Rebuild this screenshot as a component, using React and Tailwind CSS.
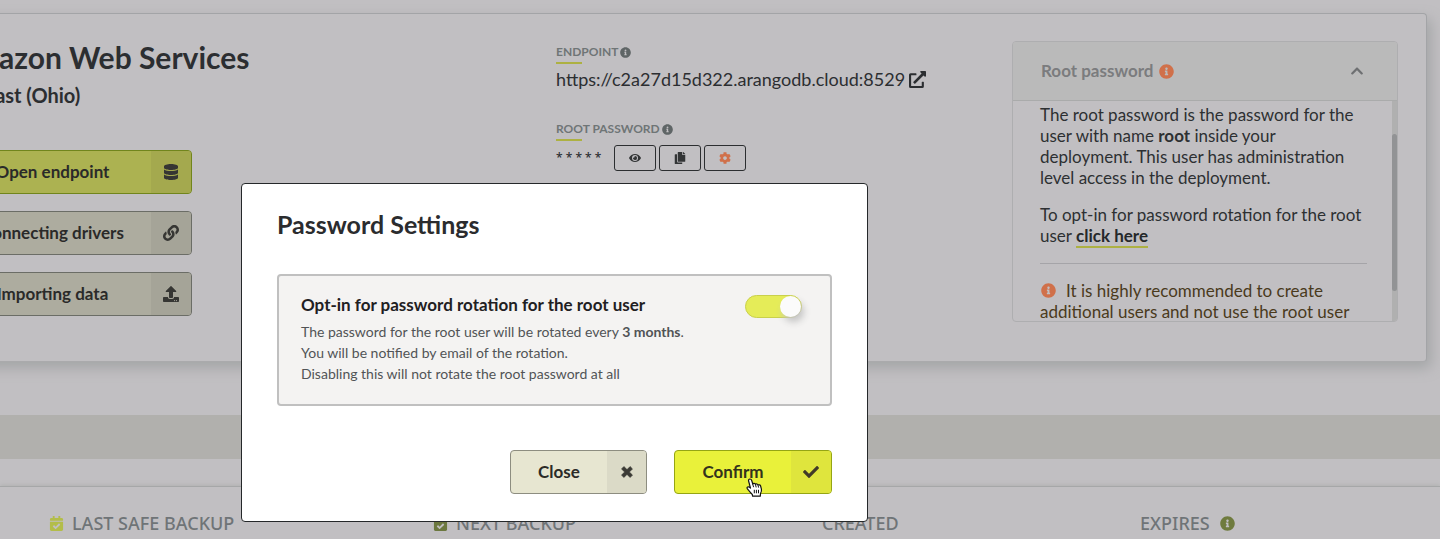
import {
  FaCalendarCheck,
  FaCheck,
  FaChevronUp,
  FaCog,
  FaCopy,
  FaDatabase,
  FaExternalLinkAlt,
  FaEye,
  FaInfoCircle,
  FaLink,
  FaUpload,
} from "react-icons/fa";

function CrossIcon({ className }) {
  return (
    <svg viewBox="0 0 12 12" className={className} fill="currentColor" aria-hidden="true">
      <path d="M2.9.5.5 2.9 3.6 6 .5 9.1l2.4 2.4L6 8.4l3.1 3.1 2.4-2.4L8.4 6l3.1-3.1L9.1.5 6 3.6z" stroke="currentColor" strokeWidth=".6" strokeLinejoin="round" />
    </svg>
  );
}

function HandCursor({ className }) {
  return (
    <svg viewBox="0 0 17 20" className={className} aria-hidden="true">
      <path
        d="M2.6 3C2.300 1.800 2.900 1 3.900 1c.9 0 1.500.5 1.800 1.500L6.800 6c.5-.9 2.400-.7 2.700.4.6-.8 2.300-.5 2.500.6.9-.5 2.300-.1 2.600 1l.8 3.200c.4 1.700-.1 3.100-.9 4.300l-.2 2.700H6.600l-.3-1.800c-1-1-2.200-2-3.200-3.500C2.500 12 1.500 11.200 1.100 10.300c-.4-1.100.9-1.900 2-1.200l1.400 1z"
        fill="#fff"
        stroke="#111"
        strokeWidth="1.2"
        strokeLinejoin="round"
      />
      <path d="M6.700 6l.9 3.200M9.500 6.600l.7 2.800M12 7.200l.6 2.400M8.300 11.800v3.500M10.400 11.800v3.500M12.500 11.800v3.500" fill="none" stroke="#111" strokeWidth="1" />
    </svg>
  );
}

function ActionButton({ label, icon: Icon, tone }) {
  const frame = tone === "lime" ? "border-[#71851c] bg-[#acb251]" : "border-[#6b6d66] bg-[#adac9f]";
  const side = tone === "lime" ? "bg-[#a4a94e]" : "bg-[#a5a498]";
  return (
    <button type="button" className={`flex h-11 w-full overflow-hidden rounded border ${frame}`}>
      <span className="flex flex-1 items-center justify-center self-stretch text-[17px] font-bold text-[#2a2a29]">{label}</span>
      <span className={`flex w-10 items-center justify-center self-stretch text-[#363633] ${side}`}>
        <Icon className="size-4" />
      </span>
    </button>
  );
}

function FieldLabel({ children }) {
  return (
    <div className="flex flex-col items-start gap-0.5">
      <h3 className="flex items-center gap-0.5 text-xs font-bold text-[#6f7576]">
        {children}
        <FaInfoCircle className="size-[11px] text-[#5f6566]" />
      </h3>
      <span className="h-0.5 w-[26px] bg-[#adb142]" />
    </div>
  );
}

function IconButton({ label, children }) {
  return (
    <button type="button" aria-label={label} className="flex h-[26px] w-[42px] items-center justify-center rounded-[3px] border border-[#2c2e30] text-[#333536]">
      {children}
    </button>
  );
}

function HelpPanel() {
  return (
    <aside className="flex h-[281px] flex-col overflow-hidden rounded border border-[#aeaeb0] text-[#2d3032]">
      <button type="button" className="flex h-[59px] shrink-0 items-center border-b border-[#aaabab] bg-[#bababa] pr-[33px] pl-7 text-[17px] font-bold text-[#7b7c7e]">
        Root password
        <FaInfoCircle className="ml-1.5 size-[15px] text-[#d0704a]" />
        <FaChevronUp className="ml-auto size-3.5 text-[#6e7072]" />
      </button>
      <div className="flex min-h-0 flex-1">
        <div className="flex-1 overflow-hidden pr-[25px] pl-[27px] text-[17px] leading-[21px]">
          <p className="pt-[3px]">
            The root password is the password for the user with name <b>root</b> inside your deployment. This user has administration level access in the deployment.
          </p>
          <p className="mt-4">
            To opt-in for password rotation for the root user{" "}
            <a href="#rotation" className="border-b-2 border-[#adb142] font-bold text-[#25282a]">click here</a>
          </p>
          <hr className="mt-[17px] border-[#a5a4a8]" />
          <p className="mt-4 text-[#4a3a1c]">
            <FaInfoCircle className="mr-2.5 ml-px inline size-[15px] align-[-1px] text-[#d0704a]" />
            It is highly recommended to create additional users and not use the root user
          </p>
        </div>
        <div className="w-[5px] bg-[#b0b0b0] pt-[33px]">
          <div className="h-[157px] rounded-full bg-[#929395]" />
        </div>
      </div>
    </aside>
  );
}

function Deployment() {
  return (
    <section className="mt-[13px] mr-[13px] -ml-[76px] grid h-[349px] grid-cols-[603px_1fr_386px] rounded border border-[#a3a4a7] border-b-[#aaaaac] bg-[#c1bfc2] px-7 pt-[27px] shadow-[4px_6px_14px_#a3a5a6]">
      <div>
        <h1 className="text-[30px] leading-8 font-bold text-[#2c2e31]">Amazon Web Services</h1>
        <h2 className="mt-2.5 text-xl leading-6 font-bold text-[#2c2e31]">US East (Ohio)</h2>
        <div className="mt-[43px] flex w-[239px] flex-col gap-[17px]">
          <ActionButton label="Open endpoint" icon={FaDatabase} tone="lime" />
          <ActionButton label="Connecting drivers" icon={FaLink} />
          <ActionButton label="Importing data" icon={FaUpload} />
        </div>
      </div>
      <div className="pt-[3px] text-[#2c2e31]">
        <FieldLabel>ENDPOINT</FieldLabel>
        <a href="#endpoint" className="mt-[3px] flex items-center gap-1 text-lg leading-6">
          https://c2a27d15d322.arangodb.cloud:8529
          <FaExternalLinkAlt className="size-[17px]" />
        </a>
        <div className="mt-[30px]">
          <FieldLabel>ROOT PASSWORD</FieldLabel>
        </div>
        <div className="mt-1 flex items-center gap-[3px]">
          <span className="w-[55px] font-['Noto_Sans'] text-xs leading-6 font-medium whitespace-nowrap">* * * * *</span>
          <IconButton label="Show password"><FaEye className="size-3" /></IconButton>
          <IconButton label="Copy password"><FaCopy className="size-3" /></IconButton>
          <IconButton label="Password settings"><FaCog className="size-3 text-[#d0704a]" /></IconButton>
        </div>
      </div>
      <HelpPanel />
    </section>
  );
}

function Backups() {
  return (
    <section className="mt-[27px] grid h-[53px] grid-cols-[384px_389px_318px_1fr] overflow-hidden border-t border-[#a6a7a8] pt-6 pl-[49px] font-['Noto_Sans'] text-lg leading-6 font-medium text-[#6f7477] shadow-[0_-1px_4px_#b0b1b0]">
      <div className="flex h-6 items-center gap-2"><FaCalendarCheck className="size-[15px] text-[#b3bd4a]" />LAST SAFE BACKUP</div>
      <div className="flex h-6 items-center gap-2"><FaCalendarCheck className="size-[15px] text-[#6c783f]" />NEXT BACKUP</div>
      <div className="flex h-6 items-center">CREATED</div>
      <div className="flex h-6 items-center gap-2.5">EXPIRES<FaInfoCircle className="size-[15px] text-[#6f7b3e]" /></div>
    </section>
  );
}

function PasswordDialog() {
  return (
    <div className="fixed inset-0 flex items-start justify-start pt-[183px] pl-[241px]">
      <div role="dialog" aria-labelledby="dialog-title" className="w-[627px] rounded border border-[#25282a] bg-white px-[35px] pt-6 pb-[27px]">
        <h2 id="dialog-title" className="text-[25px] leading-8 font-bold text-[#2b2c2e]">Password Settings</h2>
        <div className="mt-[34px] flex justify-between rounded border-2 border-[#c0c0c0] bg-[#f4f3f2] pt-[17px] pr-7 pb-5 pl-[22px]">
          <div>
            <label htmlFor="rotation" className="block text-[17px] leading-6 font-bold text-[#1f2022]">Opt-in for password rotation for the root user</label>
            <p className="mt-1 text-sm leading-[21px] text-[#515356]">
              The password for the root user will be rotated every <b>3 months</b>.<br />
              You will be notified by email of the rotation.<br />
              Disabling this will not rotate the root password at all
            </p>
          </div>
          <input
            id="rotation"
            type="checkbox"
            role="switch"
            defaultChecked
            className="mt-0.5 flex h-[23px] w-[57px] appearance-none items-center justify-end rounded-full border border-[#c9d04c] bg-[#e5ec58] before:size-[21px] before:rounded-full before:bg-[#fbfbfb] before:shadow-[3px_5px_7px_#c4c4c4]"
          />
        </div>
        <div className="mt-11 flex justify-end gap-[27px]">
          <button type="button" className="flex h-11 overflow-hidden rounded border border-[#8d8d80] bg-[#e7e6d1] text-[17px] font-bold text-[#2b2b27]">
            <span className="flex w-24 items-center justify-center self-stretch">Close</span>
            <span className="flex w-[39px] items-center justify-center self-stretch bg-[#dbdac7] text-[#3b3a35]"><CrossIcon className="size-3" /></span>
          </button>
          <button type="button" className="relative flex h-11 rounded border border-[#95a514] bg-[#e9f13a] text-[17px] font-bold text-[#33331c]">
            <span className="flex w-[116px] items-center justify-center self-stretch">Confirm</span>
            <span className="flex w-10 items-center justify-center self-stretch rounded-r-[3px] bg-[#dfe53d] text-[#413a28]"><FaCheck className="size-4" /></span>
            <HandCursor className="absolute top-[27px] left-[71px] h-5 w-[17px]" />
          </button>
        </div>
      </div>
    </div>
  );
}

export default function App() {
  return (
    <div className="flow-root overflow-hidden bg-[#c1bfc2] font-[Lato,sans-serif]">
      <Deployment />
      <div className="mt-[53px] h-11 bg-[#b1b0ad]" />
      <Backups />
      <PasswordDialog />
    </div>
  );
}
